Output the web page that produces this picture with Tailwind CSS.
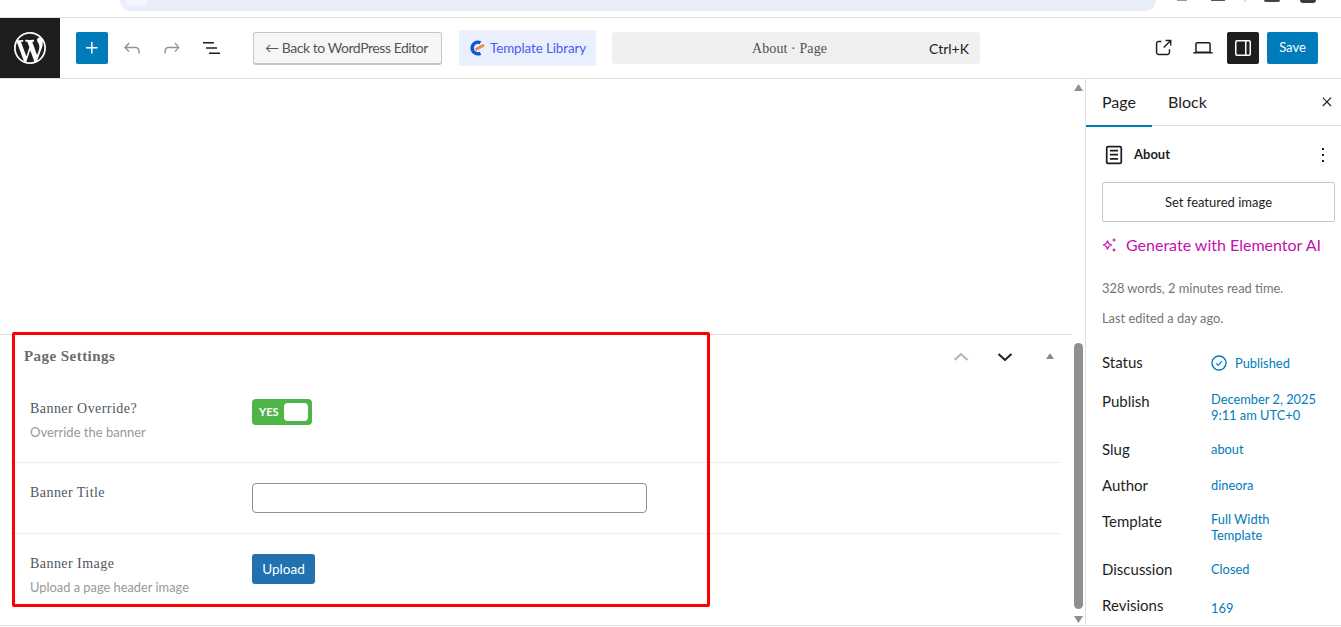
<!DOCTYPE html>
<html lang="en">
<head>
  <meta charset="UTF-8" />
  <title>Edit Page - About</title>
  <script src="https://cdn.jsdelivr.net/npm/@tailwindcss/browser@4"></script>
</head>
<body class="relative h-[627px] w-[1341px] overflow-hidden bg-white font-['Lato',sans-serif] text-[#1e1e1e]">
  <!-- browser chrome remnant -->
  <div class="relative h-[18px] border-b border-[#e0e0e0]">
    <div class="relative ml-[120px] h-[11px] w-[1036px] rounded-b-[11px] bg-[#e9eef8]">
      <div class="absolute left-[6px] top-0 h-[6px] w-[22px] rounded-b-full bg-[#f3f6fc]"></div>
    </div>
    <div class="absolute left-[1177px] top-0 h-[1px] w-[10px] bg-[#999]"></div>
    <div class="absolute left-[1211px] top-0 h-[1px] w-[14px] bg-[#555]"></div>
    <div class="absolute left-[1244px] top-0 h-[2px] w-[2px] bg-[#d3dcf5]"></div>
    <div class="absolute left-[1264px] top-0 h-[2px] w-[16px] rounded-b-[3px] bg-[#444]"></div>
    <div class="absolute left-[1300px] top-0 h-[3px] w-[16px] rounded-b-full bg-[#3a3a3a]"></div>
  </div>

  <!-- editor header -->
  <header class="flex h-[61px] items-center border-b border-[#e0e0e0]">
    <div class="flex h-[60px] w-[60px] shrink-0 items-center justify-center bg-[#1e1e1e]">
      <svg width="32" height="32" viewBox="0 0 20 20" fill="#fff"><path d="M20 10c0-5.51-4.49-10-10-10C4.48 0 0 4.49 0 10c0 5.52 4.48 10 10 10 5.51 0 10-4.48 10-10zM7.78 15.37L4.37 6.22c.55-.02 1.17-.08 1.17-.08.5-.06.44-1.13-.06-1.11 0 0-1.45.11-2.37.11-.18 0-.37 0-.58-.01C4.12 2.69 6.87 1.11 10 1.11c2.33 0 4.45.87 6.05 2.34-.68-.11-1.65.39-1.65 1.58 0 .74.45 1.36.9 2.1.35.61.55 1.36.55 2.46 0 1.49-1.4 5-1.4 5l-3.03-8.37c.54-.02.82-.17.82-.17.5-.05.44-1.25-.06-1.22 0 0-1.44.12-2.38.12-.87 0-2.33-.12-2.33-.12-.5-.03-.56 1.2-.06 1.22l.92.08 1.26 3.41zM17.41 10c.24-.64.74-1.87.43-4.25.7 1.29 1.05 2.71 1.05 4.25 0 3.29-1.73 6.24-4.4 7.78.97-2.59 1.94-5.2 2.92-7.78zM6.1 18.09C3.12 16.65 1.11 13.53 1.11 10c0-1.3.23-2.48.72-3.59C3.25 10.3 4.67 14.2 6.1 18.09zm4.03-6.63l2.58 6.98c-.86.29-1.76.45-2.71.45-.79 0-1.57-.11-2.29-.33.81-2.38 1.62-4.74 2.42-7.1z"/></svg>
    </div>
    <button class="ml-[16px] flex h-[32px] w-[32px] items-center justify-center rounded-[2px] bg-[#007cba]">
      <svg width="24" height="24" viewBox="0 0 24 24" fill="#fff"><path d="M11 12.5V17.5H12.5V12.5H17.5V11H12.5V6H11V11H6V12.5H11Z"/></svg>
    </button>
    <svg class="ml-[12px]" width="24" height="24" viewBox="0 0 24 24" fill="#949494"><path d="M18.3 11.7c-.6-.6-1.4-.9-2.3-.9H6.7l2.9-3.3-1.1-1-4.5 5L8.5 16l1-1-2.7-2.7H16c.5 0 .9.2 1.3.5 1 1 1 3.4 1 4.5v.3h1.5v-.2c0-1.5 0-4.3-1.5-5.7z"/></svg>
    <svg class="ml-[16px]" width="24" height="24" viewBox="0 0 24 24" fill="#949494"><path d="M15.6 6.5l-1.1 1 2.9 3.3H8c-.9 0-1.7.3-2.3.9-1.4 1.5-1.4 4.2-1.4 5.7v.2h1.5v-.3c0-1.1 0-3.5 1-4.5.3-.3.7-.5 1.3-.5h9.2L14.500 15l1 1.100 4-4.600-3.900-5z"/></svg>
    <svg class="ml-[16px]" width="24" height="24" viewBox="0 0 24 24" fill="#1e1e1e"><path d="M3 6h11v1.500H3zM6 11.200h11v1.500H6zM9 16.500h11V18H9z"/></svg>
    <button class="ml-[29px] flex h-[33px] w-[189px] items-center justify-center rounded-[3px] border border-b-2 border-[#c6c6c6] bg-[#f6f6f6] pr-[2px] text-[14px] tracking-[-0.45px] text-[#50575e]">← Back to WordPress Editor</button>
    <div class="ml-[17px] flex h-[36px] w-[137px] items-center rounded-[2px] bg-[#e9effd] pl-[10px]">
      <svg width="17" height="18" viewBox="0 0 17 18" fill="none"><path d="M11.500 3.800A5.800 5.800 0 1 0 11.500 14.200" stroke="#0f55d8" stroke-width="3.400"/><path d="M6.500 10.800L15 6" stroke="#ee8a4a" stroke-width="3"/></svg>
      <span class="ml-[4px] text-[13.400px] tracking-[-0.1px] text-[#4a5cf0]">Template Library</span>
    </div>
    <div class="ml-[16px] flex h-[32px] w-[368px] items-center rounded-[4px] bg-[#f0f0f0] pr-[11px]">
      <span class="ml-[140px] font-['Liberation_Serif',serif] text-[14px] tracking-[0.1px] text-[#50504f]">About · Page</span>
      <span class="ml-auto text-[14px] text-[#1e1e1e]">Ctrl+K</span>
    </div>
    <svg class="ml-[172px]" width="22" height="22" viewBox="0 0 24 24" fill="#1e1e1e"><path d="M18.200 17c0 .7-.6 1.200-1.200 1.200H7c-.7 0-1.200-.6-1.200-1.200V7c0-.7.6-1.200 1.200-1.200h3.200V4.200H7C5.500 4.200 4.200 5.500 4.200 7v10c0 1.500 1.200 2.800 2.800 2.800h10c1.500 0 2.800-1.200 2.800-2.800v-3.600h-1.500V17zM14.900 3v1.500h3.700l-6.400 6.400 1.100 1.100 6.400-6.400v3.700h1.500V3h-6.300z"/></svg>
    <svg class="ml-[17px]" width="24" height="24" viewBox="0 0 24 24" fill="#1e1e1e"><path d="M20.500 16h-.7V8c0-1.100-.9-2-2-2H6.200c-1.100 0-2 .9-2 2v8h-.7c-.8 0-1.500.7-1.500 1.500h20c0-.8-.7-1.500-1.500-1.500zM5.700 8c0-.3.2-.5.500-.5h11.600c.3 0 .5.2.5.5v7.600H5.700V8z"/></svg>
    <button class="ml-[12px] flex h-[32px] w-[32px] items-center justify-center rounded-[2px] bg-[#1e1e1e]">
      <svg width="24" height="24" viewBox="0 0 24 24" fill="#fff"><path d="M18 4H6c-1.100 0-2 .9-2 2v12c0 1.100.9 2 2 2h12c1.100 0 2-.9 2-2V6c0-1.100-.9-2-2-2zM5.500 18V6c0-.3.2-.5.500-.5h8v13H6c-.3 0-.5-.2-.5-.5zm13 0c0 .3-.2.5-.5.5h-2.500v-13H18c.3 0 .5.2.5.5v12z"/></svg>
    </button>
    <button class="ml-[8px] flex h-[32px] w-[51px] items-center justify-center rounded-[2px] bg-[#007cba] text-[13px] text-white">Save</button>
  </header>

  <div class="flex h-[547px] border-b border-[#e0e0e0]">
    <!-- content area -->
    <main class="flex w-[1072px] shrink-0 flex-col">
      <div class="h-[255px]"></div>
      <section class="flex-1 border-t border-[#e0e0e0]">
        <div class="flex h-[43px] items-center pl-[24px] pr-[18px]">
          <h2 class="font-['Liberation_Serif',serif] text-[15px] font-bold tracking-[0.45px] text-[#6b6b6b]">Page Settings</h2>
          <svg class="ml-auto" width="20" height="20" viewBox="0 0 20 20" fill="none" stroke="#b4b4b4" stroke-width="2"><path d="M3.500 13L10 7l6.500 6"/></svg>
          <svg class="ml-[24px]" width="20" height="20" viewBox="0 0 20 20" fill="none" stroke="#1e1e1e" stroke-width="2"><path d="M3.500 7l6.500 6 6.500-6"/></svg>
          <svg class="ml-[31px]" width="8" height="7" viewBox="0 0 10 8" fill="#888"><path d="M5 0l5 7H0z"/></svg>
        </div>
        <div class="ml-[10px] w-[1051px]">
          <div class="flex h-[85px] border-b border-[#eeeeee] pl-[20px] pt-[22px]">
            <div class="w-[222px]">
              <div class="font-['Liberation_Serif',serif] text-[14px] leading-[18px] tracking-[0.45px] text-[#50575e]">Banner Override?</div>
              <div class="mt-[5px] text-[13px] leading-[18px] text-[#999]">Override the banner</div>
            </div>
            <div class="-mt-[1px] flex h-[26px] w-[60px] items-center rounded-[4px] bg-[#4fb548] pl-[7px] text-[11px] font-bold text-white">
              YES
              <span class="ml-[5px] h-[18px] w-[24px] rounded-[4px] bg-white"></span>
            </div>
          </div>
          <div class="flex h-[71px] border-b border-[#eeeeee] pl-[20px] pt-[20px]">
            <div class="w-[222px] pt-[1px] font-['Liberation_Serif',serif] text-[14px] leading-[18px] tracking-[0.45px] text-[#50575e]">Banner Title</div>
            <input type="text" class="h-[30px] w-[395px] rounded-[4px] border border-[#8c8f94] bg-white" />
          </div>
          <div class="flex pl-[20px] pt-[20px]">
            <div class="w-[222px]">
              <div class="pt-[1px] font-['Liberation_Serif',serif] text-[14px] leading-[18px] tracking-[0.45px] text-[#50575e]">Banner Image</div>
              <div class="mt-[5px] text-[12.850px] leading-[18px] text-[#999]">Upload a page header image</div>
            </div>
            <button class="h-[30px] w-[63px] rounded-[3px] bg-[#2271b1] text-[13.500px] text-white">Upload</button>
          </div>
        </div>
      </section>
    </main>

    <!-- scrollbar -->
    <div class="relative w-[13px] shrink-0 bg-white">
      <svg class="absolute left-[2px] top-[5px]" width="9" height="7" viewBox="0 0 9 7" fill="#909090"><path d="M4.500 0L9 7H0z"/></svg>
      <div class="absolute left-[2px] top-[264px] h-[266px] w-[9px] rounded-full bg-[#8f8f8f]"></div>
      <svg class="absolute left-[2px] top-[537px]" width="9" height="7" viewBox="0 0 9 7" fill="#909090"><path d="M4.500 7L9 0H0z"/></svg>
    </div>

    <!-- settings sidebar -->
    <aside class="w-[256px] shrink-0 border-l border-[#e0e0e0]">
      <div class="flex h-[47px] items-center border-b border-[#e0e0e0] text-[16px]">
        <div class="relative flex h-[47px] w-[66px] items-center justify-center">Page<span class="absolute bottom-[-1px] left-0 h-[2px] w-[66px] bg-[#007cba]"></span></div>
        <div class="ml-[16px]">Block</div>
        <svg class="ml-auto mr-[5px]" width="18" height="18" viewBox="0 0 24 24" fill="#1e1e1e"><path d="M13 11.800l5-5-1.100-1-5 5-5-5-1 1 5 5-5 5 1 1.100 5-5 5 5 1.100-1.100z"/></svg>
      </div>
      <div class="flex h-[56px] items-center pl-[14px] pr-[6px] pt-[2px]">
        <svg width="28" height="28" viewBox="0 0 24 24" fill="#1e1e1e"><path d="M15.500 7.500h-7V9h7V7.500zm-7 3.500h7v1.500h-7V11zm7 3.500h-7V16h7v-1.500z"/><path fill-rule="evenodd" d="M17 4H7a2 2 0 0 0-2 2v12c0 1.100.9 2 2 2h10a2 2 0 0 0 2-2V6a2 2 0 0 0-2-2zM7 5.500h10c.3 0 .5.2.5.5v12c0 .3-.2.5-.5.5H7a.5.5 0 0 1-.5-.5V6c0-.3.2-.5.5-.5z"/></svg>
        <span class="ml-[6px] text-[13px] font-bold">About</span>
        <svg class="ml-auto" width="24" height="24" viewBox="0 0 24 24" fill="#1e1e1e"><path d="M13 19h-2v-2h2v2zm0-6h-2v-2h2v2zm0-6h-2V5h2v2z"/></svg>
      </div>
      <button class="ml-[16px] h-[40px] w-[233px] rounded-[2px] border border-[#c6c6c6] pt-[1px] text-[13px]">Set featured image</button>
      <div class="ml-[16px] mt-[12px] flex items-center text-[16px] leading-[22px] text-[#c20fb0]">
        <svg width="16" height="16" viewBox="0 0 16 16" fill="none" stroke="#c20fb0" stroke-width="1.200"><path d="M5.500 3.500c.5 3 1.500 4 4.500 4.500-3 .5-4 1.500-4.500 4.500-.5-3-1.500-4-4.500-4.500 3-.5 4-1.500 4.500-4.500z"/><path d="M12 1.500v3M10.500 3h3M12 11.500v3M10.500 13h3"/></svg>
        <span class="ml-[8px]">Generate with Elementor AI</span>
      </div>
      <p class="ml-[16px] mt-[23px] text-[12.850px] leading-[18px] text-[#757575]">328 words, 2 minutes read time.</p>
      <p class="ml-[16px] mt-[12px] text-[12.850px] leading-[18px] text-[#757575]">Last edited a day ago.</p>

      <dl class="ml-[16px] mt-[26px] grid grid-cols-[109px_1fr] text-[15px]">
        <dt class="h-[36px] leading-[18px]">Status</dt>
        <dd class="flex h-[36px] items-start pt-[1px] text-[12.850px] leading-[18px] text-[#007cba]">
          <svg class="mr-[8px] mt-[1px]" width="16" height="16" viewBox="0 0 16 16" fill="none" stroke="#007cba" stroke-width="1.400"><circle cx="8" cy="8" r="7"/><path d="M5.200 8.300l2 2 3.600-4.200" stroke-width="1.200"/></svg>Published
        </dd>
        <dt class="h-[51px] pt-[3px] leading-[18px]">Publish</dt>
        <dd class="h-[51px] pt-[2px] text-[12.850px] leading-[16px] text-[#007cba]">December 2, 2025<br />9:11 am UTC+0</dd>
        <dt class="h-[36px] leading-[18px]">Slug</dt>
        <dd class="h-[36px] pt-[1px] text-[12.850px] leading-[16px] text-[#007cba]">about</dd>
        <dt class="h-[36px] leading-[18px]">Author</dt>
        <dd class="h-[36px] pt-[1px] text-[12.850px] leading-[16px] text-[#007cba]">dineora</dd>
        <dt class="h-[48px] leading-[18px]">Template</dt>
        <dd class="-mt-[1px] h-[48px] text-[12.850px] leading-[16px] text-[#007cba]">Full Width<br />Template</dd>
        <dt class="h-[36px] leading-[18px]">Discussion</dt>
        <dd class="h-[36px] pt-[1px] text-[12.850px] leading-[16px] text-[#007cba]">Closed</dd>
        <dt class="leading-[18px]">Revisions</dt>
        <dd class="pt-[4px] text-[12.850px] leading-[16px] text-[#007cba]">169</dd>
      </dl>
    </aside>
  </div>

  <!-- annotation box drawn over the screenshot -->
  <div class="pointer-events-none absolute left-[12px] top-[332px] h-[275px] w-[698px] rounded-[2px] border-[3px] border-[#ff0000]"></div>
</body>
</html>
